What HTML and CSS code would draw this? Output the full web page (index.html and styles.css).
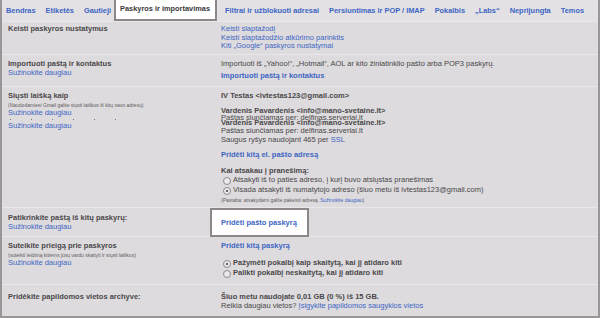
FILE: index.html
```html
<!DOCTYPE html>
<html lang="lt">
<head>
  <meta charset="UTF-8">
  <title>Nustatymai - Paskyros ir importavimas</title>
  <link rel="stylesheet" href="styles.css">
</head>
<body>
  <div class="page">
    <nav class="tabs">
      <a class="tab">Bendras</a>
      <a class="tab">Etiketės</a>
      <a class="tab">Gautieji</a>
      <a class="tab active">Paskyros ir importavimas</a>
      <a class="tab">Filtrai ir užblokuoti adresai</a>
      <a class="tab">Persiuntimas ir POP / IMAP</a>
      <a class="tab">Pokalbis</a>
      <a class="tab">„Labs“</a>
      <a class="tab">Neprijungta</a>
      <a class="tab">Temos</a>
    </nav>

    <div class="settings">
      <!-- Keisti paskyros nustatymus -->
      <div class="row row-account">
        <div class="label">
          <div class="title">Keisti paskyros nustatymus</div>
        </div>
        <div class="value">
          <a class="link">Keisti slaptažodį</a>
          <a class="link">Keisti slaptažodžio atkūrimo parinktis</a>
          <a class="link">Kiti „Google“ paskyros nustatymai</a>
        </div>
      </div>

      <!-- Importuoti -->
      <div class="row row-import">
        <div class="label">
          <div class="title">Importuoti paštą ir kontaktus</div>
          <a class="link">Sužinokite daugiau</a>
        </div>
        <div class="value">
          <div>Importuoti iš „Yahoo!“, „Hotmail“, AOL ar kito žiniatinklio pašto arba POP3 paskyrų.</div>
          <a class="link bold spaced">Importuoti paštą ir kontaktus</a>
        </div>
      </div>

      <!-- Siųsti laišką kaip -->
      <div class="row row-send">
        <div class="label">
          <div class="title">Siųsti laišką kaip</div>
          <div class="note">(Naudodamiesi Gmail galite siųsti laiškus iš kitų savo adresų)</div>
          <a class="link">Sužinokite daugiau</a>
          <div class="dots"><span></span><span></span><span></span><span></span><span></span><span></span></div>
          <a class="link">Sužinokite daugiau</a>
        </div>
        <div class="value">
          <div class="bold">IV Testas &lt;ivtestas123@gmail.com&gt;</div>
          <div class="sender">
            <div class="bold">Vardenis Pavardenis &lt;info@mano-svetaine.lt&gt;</div>
            <div class="ghost">Paštas siunčiamas per: delfinas.serveriai.lt</div>
            <div class="bold">Vardenis Pavardenis &lt;info@mano-svetaine.lt&gt;</div>
            <div>Paštas siunčiamas per: delfinas.serveriai.lt</div>
            <div>Saugus ryšys naudojant 465 per <a class="link inline">SSL</a></div>
          </div>
          <a class="link bold add-address">Pridėti kitą el. pašto adresą</a>
          <div class="reply">
            <div class="bold">Kai atsakau į pranešimą:</div>
            <label class="radio"><span class="dot"></span>Atsakyti iš to paties adreso, į kurį buvo atsiųstas pranešimas</label>
            <label class="radio"><span class="dot checked"></span>Visada atsakyti iš numatytojo adreso (šiuo metu iš ivtestas123@gmail.com)</label>
            <div class="note">(Pastaba: atsakydami galite pakeisti adresą. <a class="link inline">Sužinokite daugiau</a>)</div>
          </div>
        </div>
      </div>

      <!-- Patikrinkite paštą -->
      <div class="row row-check">
        <div class="label">
          <div class="title">Patikrinkite paštą iš kitų paskyrų:</div>
          <a class="link">Sužinokite daugiau</a>
        </div>
        <div class="value">
          <div class="highlight"><a class="link bold">Pridėti pašto paskyrą</a></div>
        </div>
      </div>

      <!-- Suteikite prieigą -->
      <div class="row row-delegate">
        <div class="label">
          <div class="title">Suteikite prieigą prie paskyros</div>
          <div class="note">(suteikti leidimą kitiems jūsų vardu skaityti ir siųsti laiškus)</div>
          <a class="link">Sužinokite daugiau</a>
        </div>
        <div class="value">
          <a class="link bold">Pridėti kitą paskyrą</a>
          <div class="options">
            <label class="radio bold"><span class="dot checked"></span>Pažymėti pokalbį kaip skaitytą, kai jį atidaro kiti</label>
            <label class="radio bold"><span class="dot"></span>Palikti pokalbį neskaitytą, kai jį atidaro kiti</label>
          </div>
        </div>
      </div>

      <!-- Saugykla -->
      <div class="row row-storage">
        <div class="label">
          <div class="title">Pridėkite papildomos vietos archyve:</div>
        </div>
        <div class="value">
          <div class="bold">Šiuo metu naudojate 0,01 GB (0 %) iš 15 GB.</div>
          <div>Reikia daugiau vietos? <a class="link inline">Įsigykite papildomos saugyklos vietos</a></div>
        </div>
      </div>
    </div>
  </div>
</body>
</html>
```

FILE: styles.css
```css
body {
  margin: 0;
  padding: 0;
  background-color: #dddbdd;
  font-family: "Liberation Sans", Arial, sans-serif;
  font-size: 7.5px;
  color: #4a484a;
}

.page {
  width: 600px;
  height: 318px;
  box-sizing: border-box;
  border-left: 2px solid #9a9597;
  border-right: 2px solid #9a9597;
  border-bottom: 2px solid #9a9597;
  overflow: hidden;
}

.tabs {
  display: flex;
  align-items: flex-end;
  gap: 10px;
  height: 22px;
  padding-left: 4px;
  background-color: #e3e1e3;
  border-bottom: 1px solid #e9e7e9;
  box-sizing: border-box;
}

.tab {
  font-size: 7.4px;
  font-weight: bold;
  color: #3d66c4;
  line-height: 9px;
  padding-bottom: 6px;
  white-space: nowrap;
}

.tab.active {
  color: #3c3a3c;
  background-color: #ffffff;
  border: 2px solid #8d8789;
  padding: 4px 5px 4px 4px;
  margin: 0 -8px 0 -7px;
  height: 12px;
  line-height: 12px;
}

.tab.active + .tab {
  margin-left: 6px;
}

.row {
  display: flex;
  border-bottom: 1px solid #e9e7e9;
  line-height: 8.6px;
}

.label {
  width: 206px;
  padding-left: 6px;
  flex-shrink: 0;
}

.value {
  flex: 1;
  padding-left: 7px;
}

.title {
  font-weight: bold;
}

.link {
  display: block;
  color: #3d66c4;
  text-decoration: none;
  cursor: pointer;
}

.link.inline {
  display: inline;
}

.bold {
  font-weight: bold;
}

.note {
  font-size: 5px;
  line-height: 8px;
  color: #5e5c5e;
}

.spaced {
  margin-top: 3px;
}

.row-account {
  height: 33px;
  padding-top: 3px;
  box-sizing: border-box;
}

.row-import {
  height: 32px;
  padding-top: 5px;
  box-sizing: border-box;
}

.row-send {
  height: 121px;
  padding-top: 5px;
  box-sizing: border-box;
}

.dots {
  display: flex;
  gap: 20px;
  height: 5px;
  align-items: center;
  padding-left: 2px;
}

.dots span {
  width: 1px;
  height: 1px;
  background-color: #7a787a;
}

.sender {
  margin-top: 6px;
}

.sender .ghost {
  margin-top: -1.5px;
  margin-bottom: -3.5px;
}

.add-address {
  margin-top: 6px;
}

.reply {
  margin-top: 8px;
}

.radio {
  display: flex;
  align-items: center;
  height: 10px;
}

.dot {
  width: 6px;
  height: 6px;
  border: 1px solid #8c8a8c;
  border-radius: 50%;
  background-color: #ebe9eb;
  margin: 0 2px 0 2px;
  position: relative;
}

.dot.checked::after {
  content: "";
  position: absolute;
  left: 2px;
  top: 2px;
  width: 2px;
  height: 2px;
  border-radius: 50%;
  background-color: #3c3a3c;
}

.row-check {
  height: 29px;
  box-sizing: border-box;
  padding-top: 6px;
}

.row-check .value {
  padding-left: 0;
  margin-top: -6px;
  margin-left: -4px;
}

.highlight {
  display: inline-block;
  background-color: #ffffff;
  border: 2px solid #8d8789;
  padding: 8px 10px 8px 9px;
  line-height: 9px;
}

.row-delegate {
  height: 48px;
  padding-top: 5px;
  box-sizing: border-box;
}

.options {
  margin-top: 8px;
}

.row-storage {
  height: 33px;
  padding-top: 8px;
  box-sizing: border-box;
  border-bottom: none;
}
```
